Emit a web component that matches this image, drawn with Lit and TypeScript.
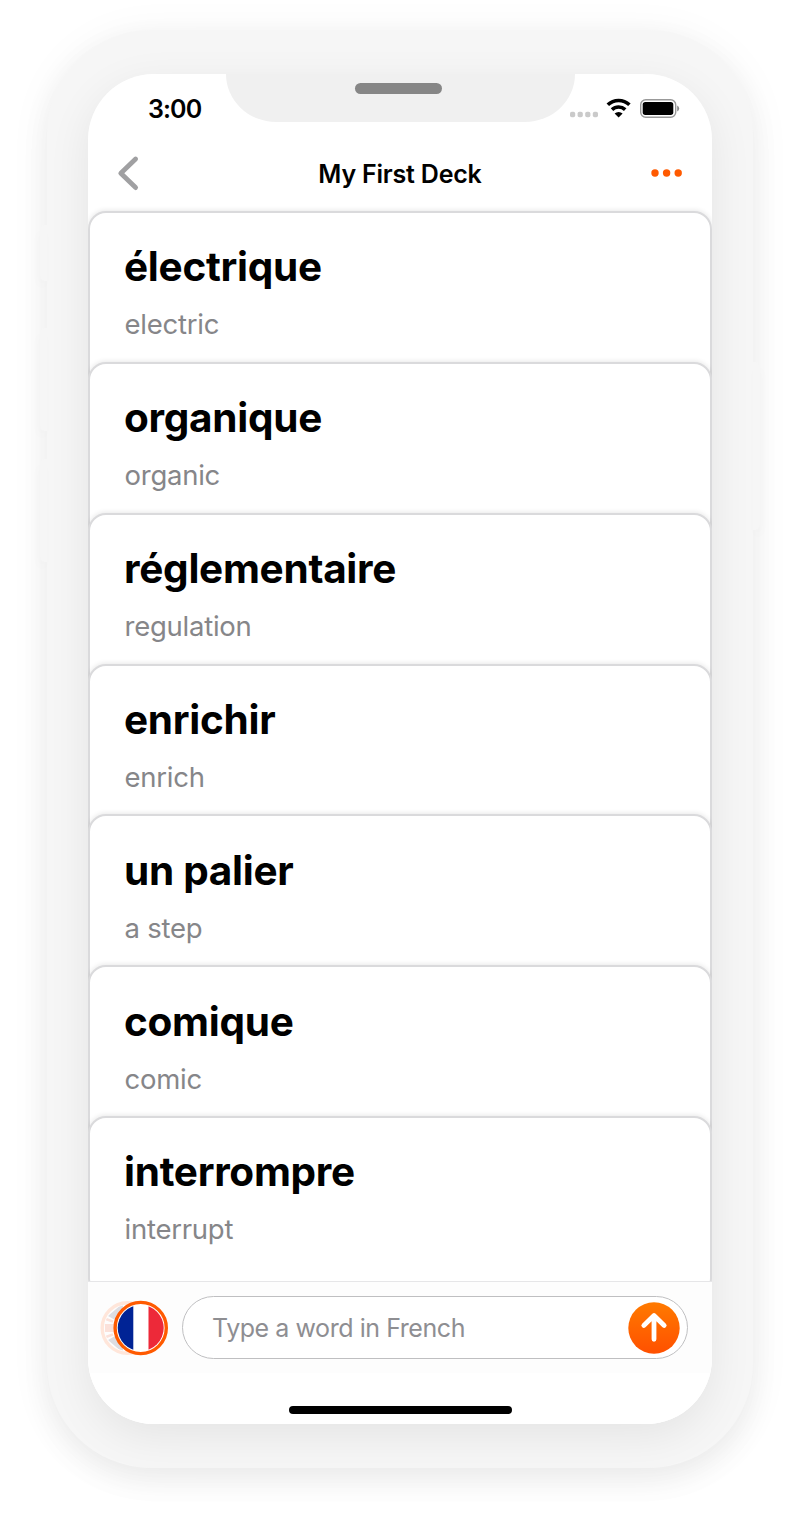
import { LitElement, html, css } from "lit";
import { customElement, property } from "lit/decorators.js";

interface Entry {
  word: string;
  meaning: string;
}

const DECK: Entry[] = [
  { word: "électrique", meaning: "electric" },
  { word: "organique", meaning: "organic" },
  { word: "réglementaire", meaning: "regulation" },
  { word: "enrichir", meaning: "enrich" },
  { word: "un palier", meaning: "a step" },
  { word: "comique", meaning: "comic" },
  { word: "interrompre", meaning: "interrupt" },
];

@customElement("word-card")
export class WordCard extends LitElement {
  static styles = css`
    :host {
      display: block;
      flex: none;
      height: 180px;
      margin-bottom: -29.2px;
      box-sizing: border-box;
      padding: 30.3px 34px 0 34px;
      background: #fff;
      border: 2px solid #dadadc;
      border-radius: 18px;
      box-shadow: 0 -1px 5px rgba(0, 0, 0, 0.09);
    }
    .word {
      font-size: 40.5px;
      line-height: 48px;
      font-weight: 700;
      letter-spacing: -0.28px;
      color: #000;
      white-space: nowrap;
    }
    .meaning {
      margin: 16px 0 0 0.5px;
      font-size: 27.5px;
      line-height: 34px;
      letter-spacing: -0.25px;
      color: #868689;
      white-space: nowrap;
    }
  `;

  @property() word = "";
  @property() meaning = "";

  render() {
    return html`
      <div class="word">${this.word}</div>
      <div class="meaning">${this.meaning}</div>
    `;
  }
}

@customElement("app-root")
export class AppRoot extends LitElement {
  static styles = css`
    :host {
      display: block;
      box-sizing: border-box;
      height: 1518px;
      padding: 30px 47px 50px;
      background: #fff;
      overflow: hidden;
      font-family: Inter, "Liberation Sans", sans-serif;
    }
    .phone {
      position: relative;
      box-sizing: border-box;
      height: 1438px;
      padding: 44px 41px;
      border-radius: 104px;
      background: #f6f6f6;
      box-shadow: 0 4px 44px rgba(0, 0, 0, 0.05), 0 12px 30px rgba(0, 0, 0, 0.055);
    }
    .shade {
      position: absolute;
      inset: 0;
      border-radius: 104px;
      overflow: hidden;
    }
    .shade::before {
      content: "";
      position: absolute;
      inset: 44px 41px;
      border-radius: 66px;
      box-shadow: 0 12px 44px rgba(0, 0, 0, 0.075);
    }
    .key {
      position: absolute;
      width: 7px;
      background: #f6f6f6;
    }
    .left {
      left: -7px;
      border-radius: 5px 0 0 5px;
      box-shadow: -2px 6px 10px rgba(0, 0, 0, 0.02);
    }
    .right {
      right: -7px;
      border-radius: 0 5px 5px 0;
      box-shadow: 2px 6px 10px rgba(0, 0, 0, 0.02);
    }
    .mute {
      top: 195px;
      height: 56px;
    }
    .up {
      top: 298px;
      height: 103px;
    }
    .down {
      top: 429px;
      height: 103px;
    }
    .power {
      top: 332px;
      height: 168px;
    }
    .screen {
      position: relative;
      display: flex;
      flex-direction: column;
      height: 1350px;
      border-radius: 66px;
      background: #fff;
      overflow: hidden;
    }
    .notch {
      position: absolute;
      top: 0;
      left: 138px;
      width: 349px;
      height: 48px;
      border-radius: 0 0 50px 50px / 0 0 48px 48px;
      background: #f0f0f0;
    }
    .speaker {
      width: 87px;
      height: 11px;
      margin: 9px 0 0 129px;
      border-radius: 6px;
      background: #868686;
    }
    .status {
      flex: none;
      display: flex;
      justify-content: space-between;
      height: 68px;
      padding: 0 32px 0 60px;
    }
    .time {
      margin-top: 19px;
      font-size: 25px;
      line-height: 32px;
      font-weight: 600;
      letter-spacing: -0.9px;
      color: #000;
    }
    .indicators {
      display: block;
      margin-top: 21px;
    }
    .nav {
      flex: none;
      display: grid;
      grid-template-columns: 60px 1fr 60px;
      align-items: center;
      height: 64px;
      padding: 0 29px 0 29px;
    }
    .title {
      text-align: center;
      font-size: 25px;
      line-height: 32px;
      font-weight: 600;
      letter-spacing: -0.2px;
      color: #000;
    }
    .nav svg {
      display: block;
      margin-bottom: 2px;
    }
    .more {
      justify-self: end;
    }
    .list {
      flex: 1;
      min-height: 0;
      display: flex;
      flex-direction: column;
      overflow: hidden;
      padding: 5.2px 0 0;
    }
    .composer {
      position: relative;
      flex: none;
      box-sizing: border-box;
      height: 143px;
      border-top: 1.5px solid #e6e6e8;
      background: linear-gradient(#fdfdfd 0 91px, #fff 91px);
      display: flex;
      flex-direction: column;
    }
    .row {
      display: flex;
      align-items: center;
      height: 63px;
      margin: 14px 24.5px 0 11px;
      gap: 13px;
    }
    .row svg {
      display: block;
      flex: none;
    }
    .field {
      flex: 1;
      box-sizing: border-box;
      height: 63px;
      display: flex;
      align-items: center;
      justify-content: space-between;
      padding: 0 6.5px 0 29px;
      border: 1.5px solid #bfbfc1;
      border-radius: 32px;
      background: #fff;
    }
    .hint {
      font-size: 25px;
      line-height: 32px;
      letter-spacing: -0.44px;
      color: #8e8e92;
      white-space: nowrap;
    }
    .home {
      align-self: center;
      width: 223px;
      height: 8px;
      margin-top: 46.5px;
      border-radius: 4px;
      background: #000;
    }
  `;

  render() {
    return html`
      <div class="phone">
        <div class="key left mute"></div>
        <div class="key left up"></div>
        <div class="key left down"></div>
        <div class="key right power"></div>
        <div class="shade"></div>
        <div class="screen">
          <div class="status">
            <div class="time">3:00</div>
            <svg class="indicators" width="110" height="26" viewBox="0 0 110 26">
              <g fill="#cacaca">
                <rect x="0" y="16.8" width="5.2" height="5.4" rx="1.8" />
                <rect x="7.6" y="16.8" width="5.2" height="5.4" rx="1.8" />
                <rect x="15.2" y="16.8" width="5.2" height="5.4" rx="1.8" />
                <rect x="22.8" y="16.8" width="5.2" height="5.4" rx="1.8" />
              </g>
              <g fill="none" stroke="#000" stroke-width="3.6">
                <path d="M37.8 9.8a15.6 15.6 0 0 1 21.6 0" />
                <path d="M42 14.6a9.6 9.6 0 0 1 13.2 0" />
              </g>
              <path d="M48.6 22.6l-4-4a5.6 5.6 0 0 1 8 0z" fill="#000" />
              <rect x="70.7" y="4.7" width="35" height="17.6" rx="5" fill="#fff" stroke="#999" stroke-width="1.4" />
              <rect x="72.7" y="7" width="30.6" height="12.9" rx="2.6" fill="#000" />
              <path d="M107.2 10.4q2 1 2 3t-2 3z" fill="#8a8a8a" />
            </svg>
          </div>
          <nav class="nav">
            <svg width="26" height="36" viewBox="0 0 26 36">
              <path d="M18.6 4L3.8 18.3L18.6 32.6" fill="none" stroke="#a0a0a2" stroke-width="4.8" stroke-linecap="round" stroke-linejoin="round" />
            </svg>
            <div class="title">My First Deck</div>
            <svg class="more" width="32" height="10" viewBox="0 0 32 10" fill="#ff5a00">
              <circle cx="4" cy="5" r="3.7" />
              <circle cx="15.6" cy="5" r="3.7" />
              <circle cx="27.2" cy="5" r="3.7" />
            </svg>
          </nav>
          <div class="list">
            ${DECK.map((e) => html`<word-card .word=${e.word} .meaning=${e.meaning}></word-card>`)}
          </div>
          <div class="composer">
            <div class="row">
              <svg width="70" height="58" viewBox="0 0 70 58">
                <defs>
                  <clipPath id="flag"><circle cx="41.7" cy="29" r="23" /></clipPath>
                  <clipPath id="uk"><circle cx="28.5" cy="29" r="23" /></clipPath>
                </defs>
                <circle cx="28.5" cy="29" r="25.3" fill="none" stroke="#ffe6da" stroke-width="3.4" />
                <g clip-path="url(#uk)">
                  <path d="M9 17L24 4v11l-6 7zM9 41l15 13V43l-6-7z" fill="#dddde2" />
                  <path d="M6 25h9v8H6z" fill="#fbe1da" />
                  <path d="M7 20l7 2.6M7 38l7-2.6" stroke="#fbe1da" stroke-width="2.6" />
                </g>
                <circle cx="41.7" cy="29" r="25.6" fill="#fff" stroke="#ff5a00" stroke-width="3.4" />
                <g clip-path="url(#flag)">
                  <path d="M18 5h16.3v48H18z" fill="#002395" />
                  <path d="M49.5 5H66v48H49.5z" fill="#ed2939" />
                </g>
              </svg>
              <div class="field">
                <span class="hint">Type a word in French</span>
                <svg width="52" height="52" viewBox="0 0 52 52">
                  <defs>
                    <linearGradient id="send" x1="0" y1="0" x2="0" y2="1">
                      <stop offset="0" stop-color="#ff7a00" />
                      <stop offset="1" stop-color="#ff5000" />
                    </linearGradient>
                  </defs>
                  <circle cx="26" cy="26" r="25.7" fill="url(#send)" />
                  <path d="M26 37.3V14M15.8 23.4L26 13.6L36.2 23.4" fill="none" stroke="#fff" stroke-width="4.8" stroke-linecap="round" stroke-linejoin="round" />
                </svg>
              </div>
            </div>
            <div class="home"></div>
          </div>
          <div class="notch"><div class="speaker"></div></div>
        </div>
      </div>
    `;
  }
}
